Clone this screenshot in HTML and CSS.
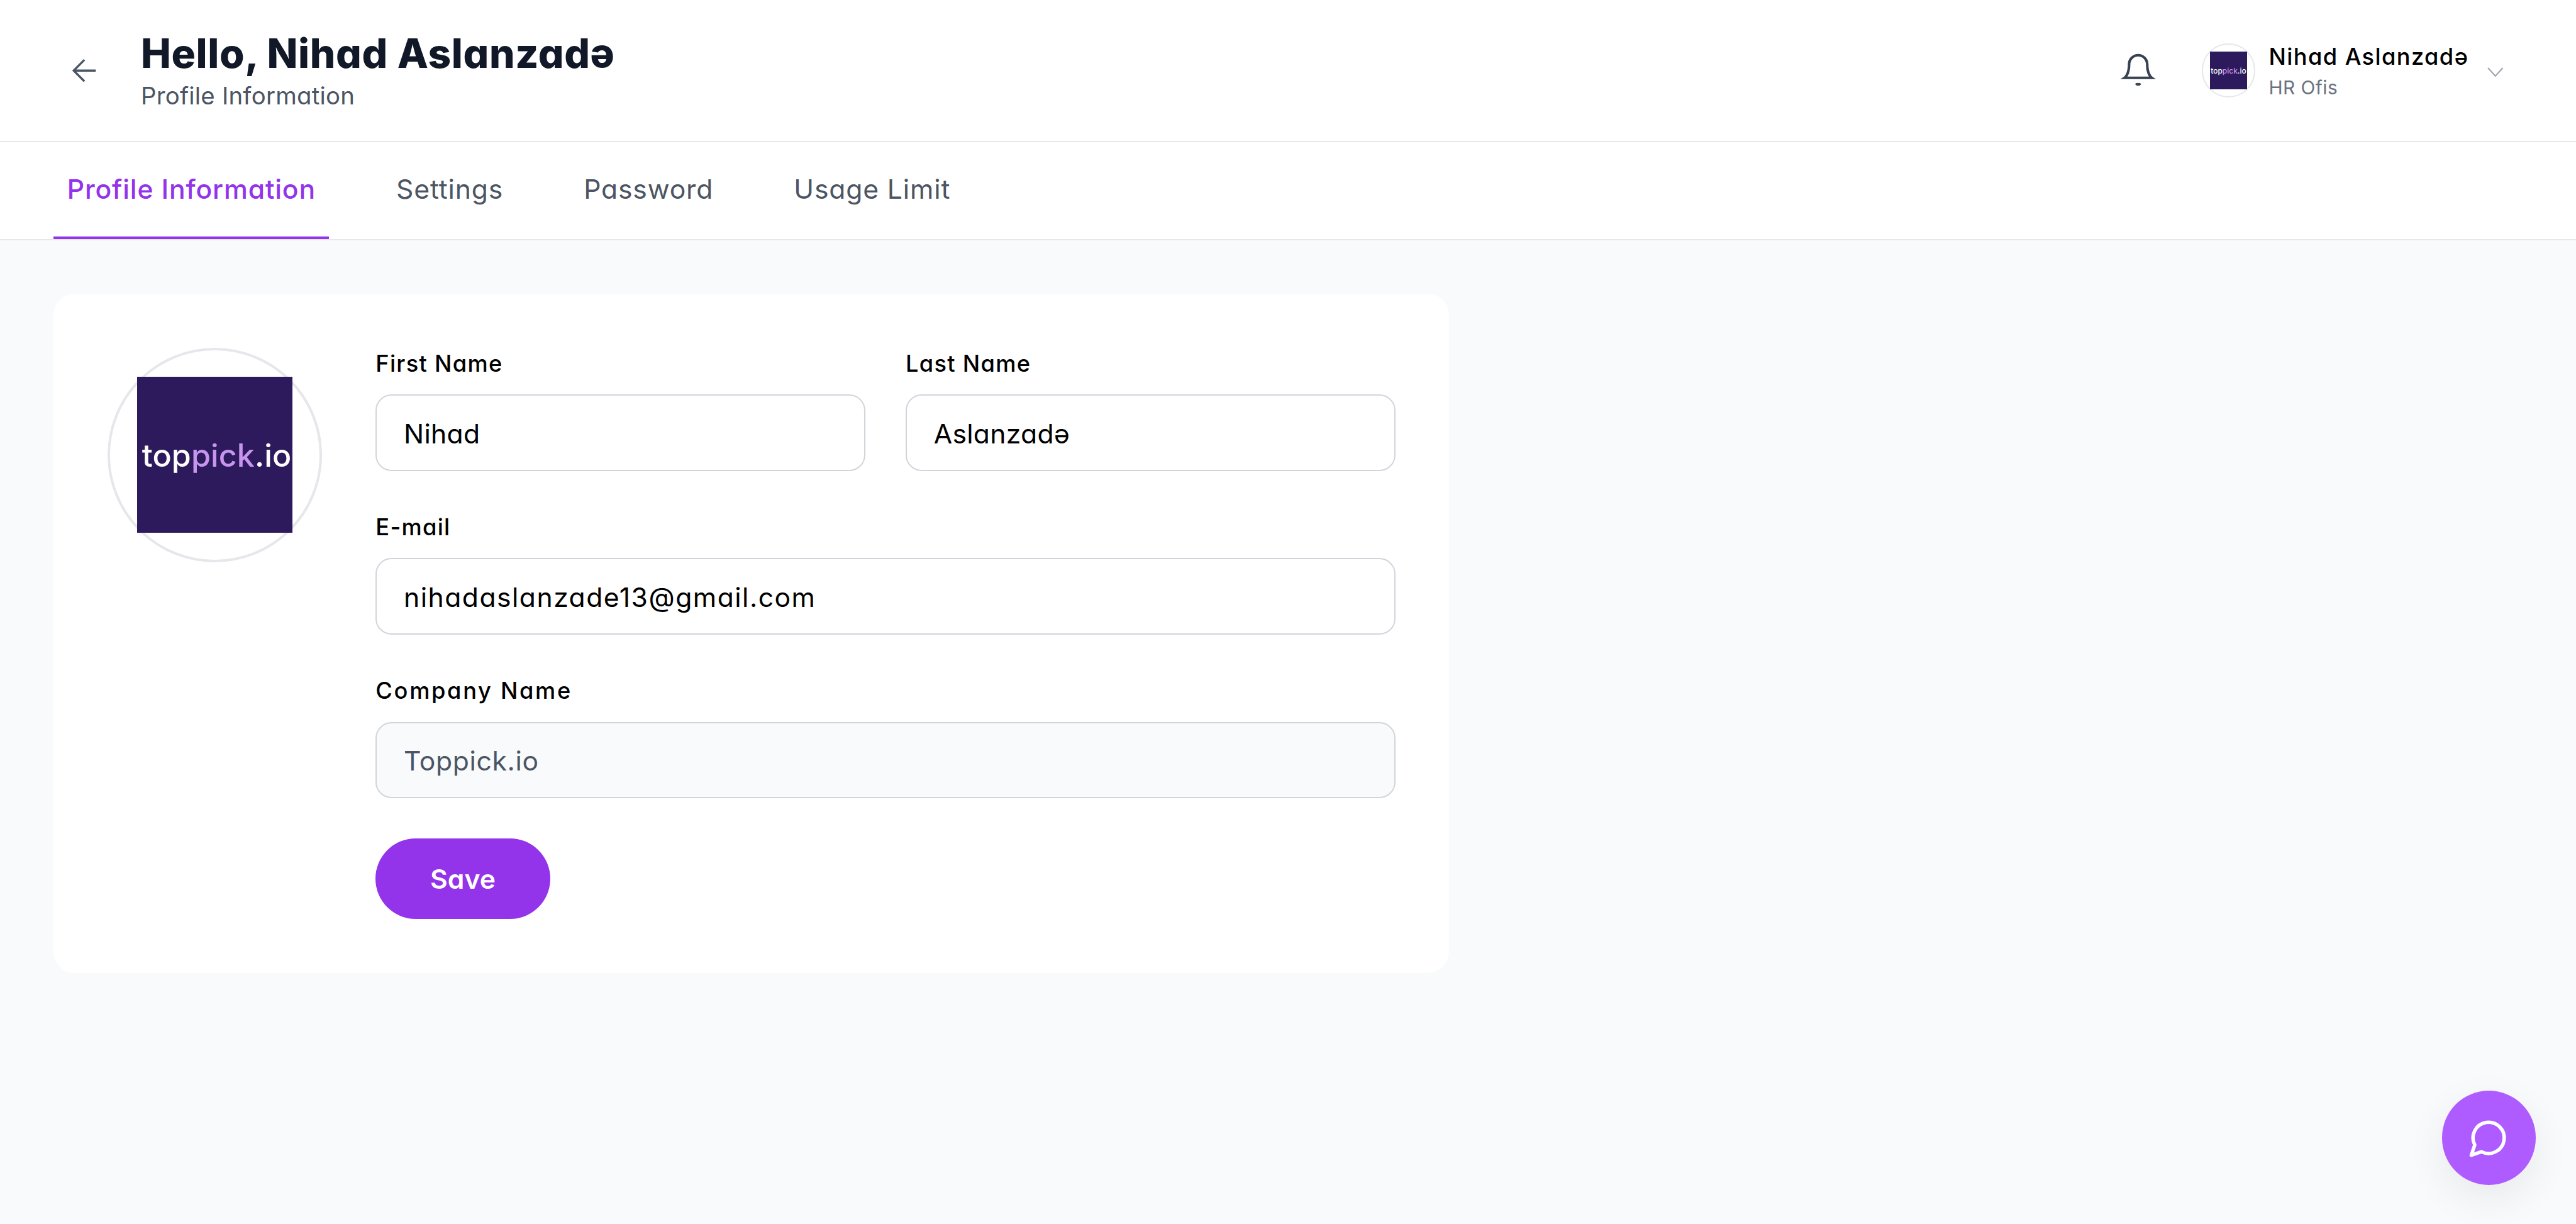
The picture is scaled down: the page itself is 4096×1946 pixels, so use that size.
FILE: index.html
```html
<!DOCTYPE html>
<html lang="en">
<head>
<meta charset="utf-8">
<title>Profile Information</title>
<link rel="stylesheet" href="styles.css">
</head>
<body>
<div class="app">
  <header class="topbar">
    <div class="topbar-left">
      <svg class="back" viewBox="0 0 18 18" fill="none"><path d="M17.5 9H1.2M9 1 1 9l8 8"/></svg>
      <div class="titles">
        <h1 class="title">Hello, Nihad Aslanzadə</h1>
        <p class="subtitle">Profile Information</p>
      </div>
    </div>
    <div class="topbar-right">
      <svg class="bell" viewBox="0 0 24 24" fill="none"><path d="M6 8a6 6 0 0 1 12 0c0 7 3 9 3 9H3s3-2 3-9"/><path d="M10.6 20.6c.6 1 2.2 1 2.8 0"/></svg>
      <div class="user">
        <div class="mini-avatar"><div class="mini-logo"><span class="mini-text">top<b class="mini-accent">pick</b>.io</span></div></div>
        <div class="user-text">
          <div class="user-name">Nihad Aslanzadə</div>
          <div class="user-role">HR Ofis</div>
        </div>
        <svg class="chevron" viewBox="0 0 12 7" fill="none"><path d="m.5.5 5.5 6 5.5-6"/></svg>
      </div>
    </div>
  </header>
  <nav class="tabs">
    <a class="tab tab-active">Profile Information</a>
    <a class="tab">Settings</a>
    <a class="tab">Password</a>
    <a class="tab">Usage Limit</a>
  </nav>
  <main class="content">
    <section class="card">
      <div class="avatar">
        <div class="logo"><span class="logo-text">top<b class="logo-accent">pick</b>.io</span></div>
      </div>
      <form class="form">
        <div class="row">
          <label class="field"><span class="label">First Name</span><span class="input">Nihad</span></label>
          <label class="field"><span class="label">Last Name</span><span class="input">Aslanzadə</span></label>
        </div>
        <label class="field"><span class="label">E-mail</span><span class="input input-wide">nihadaslanzade13@gmail.com</span></label>
        <label class="field"><span class="label label-wide">Company Name</span><span class="input input-disabled">Toppick.io</span></label>
        <button class="save" type="button">Save</button>
      </form>
    </section>
  </main>
  <button class="chat" type="button" aria-label="Chat">
    <svg viewBox="0 0 24 24" fill="none"><path d="M7.9 20A9 9 0 1 0 4 16.1L2 22Z"/></svg>
  </button>
</div>
</body>
</html>
```
FILE: styles.css
```css
* { box-sizing: border-box; }
html, body { margin: 0; padding: 0; background: #f9fafb; }
body {
  zoom: 2.13333;
  font-family: Inter, "Noto Sans", "Liberation Sans", sans-serif;
  font-feature-settings: "cv11" 1;
  color: #111827;
}
.app { position: relative; width: 1920px; height: 912px; overflow: hidden; }

.topbar {
  height: 106px;
  background: #fff;
  border-bottom: 1px solid #e5e7eb;
  display: flex;
  justify-content: space-between;
  padding: 0 54px 0 54px;
}
.topbar-left { display: flex; align-items: center; gap: 33px; }
.back { width: 18px; height: 18px; stroke: #4b5563; stroke-width: 1.6; }
.titles { display: flex; flex-direction: column; margin-top: -2px; }
.title { margin: 0; font-size: 30px; line-height: 40px; font-weight: 800; color: #111827; letter-spacing: 0.3px; white-space: nowrap; }
.subtitle { margin: 0; font-size: 18px; line-height: 24px; font-weight: 400; color: #4b5563; letter-spacing: 0.1px; }

.topbar-right { display: flex; align-items: center; gap: 34px; }
.bell { width: 27px; height: 27px; stroke: #374151; stroke-width: 1.7; }
.user { display: flex; align-items: center; }
.mini-avatar {
  width: 40px; height: 40px; border-radius: 50%; border: 1px solid #e5e7eb;
  display: flex; align-items: center; justify-content: center;
}
.mini-logo { width: 28px; height: 28px; flex: none; background: #2d1a5c; display: flex; align-items: center; justify-content: center; overflow: hidden; }
.mini-text { font-size: 5.6px; font-weight: 500; color: #fff; }
.mini-accent { font-weight: 500; color: #c795ee; }
.user-text { margin-left: 10px; padding-top: 2px; }
.user-name { font-size: 17px; line-height: 22px; font-weight: 500; color: #000; letter-spacing: 0.65px; white-space: nowrap; }
.user-role { font-size: 14px; line-height: 20px; margin-top: 2px; color: #6b7280; letter-spacing: 0.2px; }
.chevron { width: 12px; height: 7px; stroke: #9ca3af; stroke-width: 1; margin-left: 14px; margin-top: 2px; }

.tabs {
  height: 73px;
  background: #fff;
  border-bottom: 1px solid #e5e7eb;
  display: flex;
  gap: 40px;
  padding-left: 40px;
}
.tab { height: 72px; padding: 0 10px; display: flex; align-items: center; font-size: 20px; font-weight: 400; letter-spacing: 0.4px; color: #4b5563; border-bottom: 2px solid transparent; }
.tab-active { color: #9333ea; font-weight: 500; border-bottom-color: #9333ea; }

.content { padding: 40px; }
.card { width: 1040px; background: #fff; border-radius: 16px; padding: 40px; display: flex; gap: 40px; }
.avatar {
  width: 160px; height: 160px; flex: none; border-radius: 50%; border: 2px solid #e5e7eb;
  display: flex; align-items: center; justify-content: center;
}
.logo { width: 116px; height: 116px; flex: none; background: #2d1a5c; display: flex; align-items: center; justify-content: center; padding-left: 3px; }
.logo-text { font-size: 23.5px; font-weight: 500; color: #fff; letter-spacing: 0.05px; }
.logo-accent { font-weight: 500; color: #c795ee; }

.form { flex: 1; display: flex; flex-direction: column; gap: 30px; }
.row { display: grid; grid-template-columns: 1fr 1fr; gap: 30px; }
.field { display: flex; flex-direction: column; gap: 11px; }
.label { font-size: 17px; line-height: 24px; font-weight: 500; color: #000; letter-spacing: 0.6px; }
.label-wide { letter-spacing: 1.25px; }
.input {
  height: 57px; padding: 1px 20px 0; display: flex; align-items: center;
  font-size: 20px; color: #000; background: #fff; letter-spacing: 0.15px;
  border: 1px solid #d1d5db; border-radius: 12px;
}
.input-wide { letter-spacing: 0.7px; }
.input-disabled { background: #f9fafb; color: #4b5563; letter-spacing: 0.3px; }
.save {
  width: 130px; height: 60px; border: 0; border-radius: 30px; background: #9333ea;
  font: inherit; font-size: 20px; font-weight: 600; color: #fff;
}

.chat {
  position: absolute; right: 30px; bottom: 29px; width: 70px; height: 70px; border: 0; border-radius: 50%;
  background: #ae5cff; box-shadow: 0 10px 30px rgba(0,0,0,.07);
  display: flex; align-items: center; justify-content: center; padding: 0;
}
.chat svg { width: 31px; height: 31px; stroke: #fff; stroke-width: 2; stroke-linejoin: round; stroke-linecap: round; }
```
